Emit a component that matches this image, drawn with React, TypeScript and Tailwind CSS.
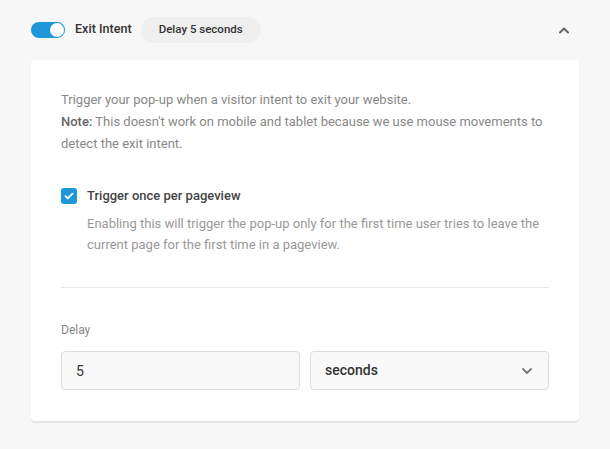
import React, { useState } from 'react';

const ChevronUp = () => (
  <svg width="12" height="8" viewBox="0 0 12 8" fill="none">
    <path d="M2 6.5 L6 2.5 L10 6.5" stroke="#666" strokeWidth="2" strokeLinecap="round" strokeLinejoin="round" />
  </svg>
);

const ChevronDown = () => (
  <svg width="12" height="8" viewBox="0 0 12 8" fill="none">
    <path d="M2 2 L6 6 L10 2" stroke="#777" strokeWidth="1.8" strokeLinecap="round" strokeLinejoin="round" />
  </svg>
);

export default function App() {
  const [enabled, setEnabled] = useState(true);
  const [once, setOnce] = useState(true);
  const [delay, setDelay] = useState('5');

  return (
    <div
      className="min-h-[449px] bg-[#f7f7f7] px-[31px] pb-[28px]"
      style={{ fontFamily: 'Roboto, "Noto Sans", sans-serif' }}
    >
      <div className="flex h-[60px] items-center pb-[1px]">
        <button
          onClick={() => setEnabled(!enabled)}
          className={`relative h-[16px] w-[34px] rounded-full ${enabled ? 'bg-[#1e98d8]' : 'bg-[#ccc]'}`}
        >
          <span
            className={`absolute top-[1px] h-[14px] w-[14px] rounded-full bg-white ${enabled ? 'right-[1px]' : 'left-[1px]'}`}
          />
        </button>
        <span className="ml-[10px] text-[12.6px] font-medium text-[#333]">Exit Intent</span>
        <span className="ml-[9px] flex h-[26px] w-[120px] items-center justify-center rounded-full bg-[#efefef] text-[11.5px] font-medium text-[#333]">
          Delay 5 seconds
        </span>
        <span className="ml-auto mr-[9px] flex items-center">
          <ChevronUp />
        </span>
      </div>

      <div className="rounded-[4px] bg-white px-[30px] pb-[31px] pt-[29px] shadow-[0_2px_0_0_#e4e4e4]">
        <p className="text-[13px] leading-[22px] text-[#888]">
          Trigger your pop-up when a visitor intent to exit your website.
          <br />
          <span className="font-medium text-[#666]">Note:</span> This doesn't work on mobile and tablet because we use mouse
          movements to detect the exit intent.
        </p>

        <div className="mt-[30px] flex items-start">
          <button
            onClick={() => setOnce(!once)}
            className={`mt-[3px] flex h-[16px] w-[16px] shrink-0 items-center justify-center rounded-[3px] ${once ? 'bg-[#1e98d8]' : 'border border-[#ccc] bg-white'}`}
          >
            {once && (
              <svg width="10" height="8" viewBox="0 0 10 8" fill="none">
                <path d="M1.5 4.2 L3.8 6.3 L8.5 1.7" stroke="white" strokeWidth="1.8" strokeLinecap="round" strokeLinejoin="round" />
              </svg>
            )}
          </button>
          <div className="ml-[10px]">
            <div className="text-[13px] font-medium leading-[22px] text-[#444]">Trigger once per pageview</div>
            <p className="mt-[6px] text-[13px] leading-[21px] text-[#999]">
              Enabling this will trigger the pop-up only for the first time user tries to leave the current page for the
              first time in a pageview.
            </p>
          </div>
        </div>

        <div className="mt-[32px] h-px bg-[#e6e6e6]" />

        <div className="mt-[34px] text-[12px] leading-[16px] text-[#888]">Delay</div>
        <div className="mt-[13px] grid grid-cols-2 gap-[10px]">
          <input
            value={delay}
            onChange={(e) => setDelay(e.target.value)}
            className="h-[39px] rounded-[4px] border border-[#dcdcdc] bg-[#f9f9f9] px-[14px] text-[14px] text-[#333] outline-none"
          />
          <div className="flex h-[39px] items-center justify-between rounded-[4px] border border-[#dcdcdc] bg-[#f9f9f9] pl-[14px] pr-[15px]">
            <span className="text-[14px] font-medium text-[#333]">seconds</span>
            <ChevronDown />
          </div>
        </div>
      </div>
    </div>
  );
}
